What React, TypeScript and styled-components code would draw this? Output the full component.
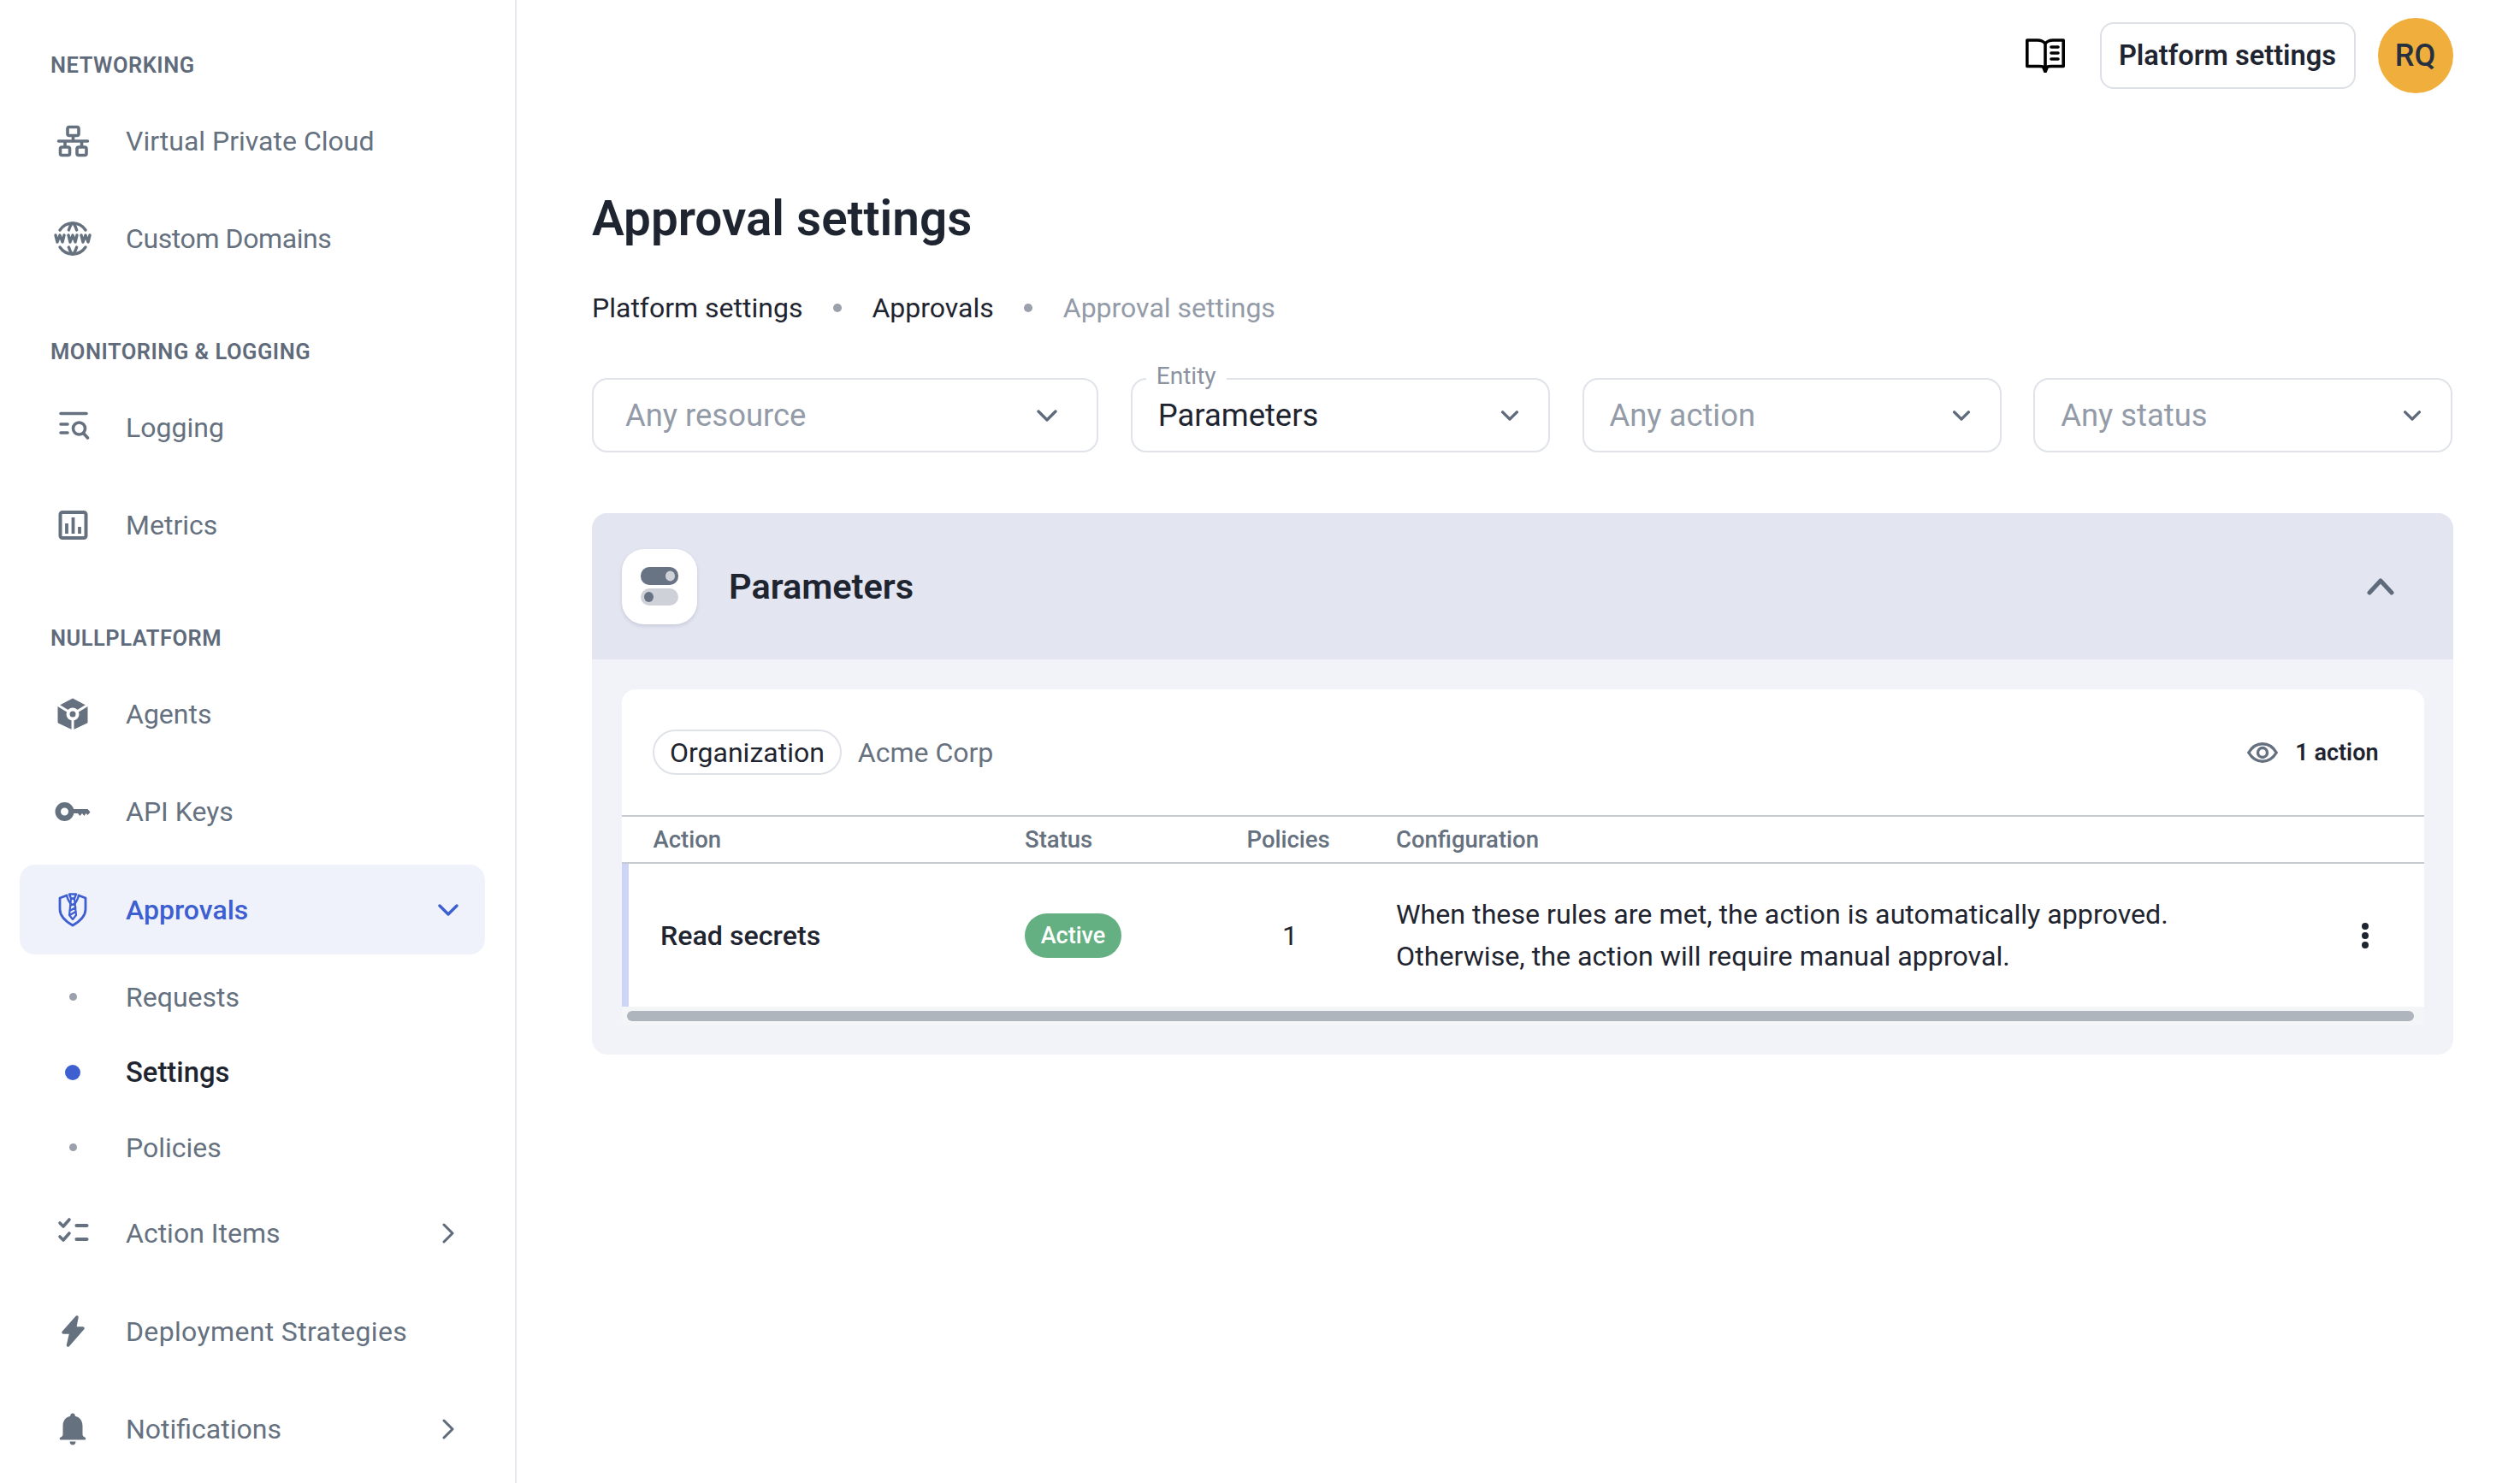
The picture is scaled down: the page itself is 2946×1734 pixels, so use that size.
import React from "react";
import styled, { createGlobalStyle } from "styled-components";
import { TbWorldWww } from "react-icons/tb";

const GlobalStyle = createGlobalStyle`
  html, body { margin: 0; padding: 0; background: #fff; }
  body { font-family: "Roboto", "Liberation Sans", sans-serif; color: #1f2530; }
  * { box-sizing: border-box; }
`;

const GRAY = "#667180";
const BLUE = "#3d5fd0";

const Page = styled.div`
  display: flex;
  width: 2946px;
  height: 1734px;
  overflow: hidden;
`;

const Sidebar = styled.nav`
  flex: 0 0 604px;
  border-right: 2px solid #e8eaef;
  padding: 56px 35px 0 23px;
`;

const SectionTitle = styled.h3<{ $gap?: boolean }>`
  margin: ${(p) => (p.$gap ? "59.5px" : "0")} 0 16px 36px;
  height: 40px;
  line-height: 40px;
  font-size: 25.5px;
  font-weight: 600;
  letter-spacing: 0.5px;
  color: #5f6b7b;
  text-transform: uppercase;
`;

const NavItem = styled.div<{ $active?: boolean }>`
  display: flex;
  align-items: center;
  height: 105px;
  margin-bottom: 9.5px;
  padding: 0 31px 0 38px;
  border-radius: 18px;
  background: ${(p) => (p.$active ? "#eff2fb" : "transparent")};
  color: ${(p) => (p.$active ? BLUE : GRAY)};
  font-size: 32px;
  font-weight: ${(p) => (p.$active ? 500 : 400)};
`;

const NavIcon = styled.span`
  display: flex;
  align-items: center;
  justify-content: center;
  width: 48px;
  height: 48px;
  margin-right: 38px;
  flex: none;
  svg { display: block; }
`;

const NavLabel = styled.span<{ $track?: number }>`
  flex: 1;
  line-height: 40px;
  letter-spacing: ${(p) => p.$track ?? 0}px;
`;

const SubList = styled.div`
  margin: -4px 0 4px;
`;

const SubItem = styled.div<{ $active?: boolean }>`
  display: flex;
  align-items: center;
  height: 88px;
  padding-left: 38px;
  font-size: ${(p) => (p.$active ? "32.8px" : "32px")};
  font-weight: ${(p) => (p.$active ? 500 : 400)};
  color: ${(p) => (p.$active ? "#1f2530" : GRAY)};
`;

const DotSlot = styled.span`
  display: flex;
  align-items: center;
  justify-content: center;
  width: 48px;
  margin-right: 38px;
`;

const Dot = styled.i<{ $active?: boolean }>`
  display: block;
  width: ${(p) => (p.$active ? "18px" : "9px")};
  height: ${(p) => (p.$active ? "18px" : "9px")};
  border-radius: 50%;
  background: ${(p) => (p.$active ? BLUE : "#9aa1ad")};
`;

const Main = styled.main`
  flex: 1;
  min-width: 0;
  padding: 0 78.5px 0 88px;
`;

const TopBar = styled.header`
  display: flex;
  align-items: center;
  justify-content: flex-end;
  height: 130px;
`;

const BookButton = styled.span`
  display: flex;
  margin-right: 41px;
`;

const PlatformButton = styled.button`
  height: 78px;
  width: 299px;
  padding: 0;
  margin-right: 26px;
  background: #fff;
  border: 2px solid #dde0e6;
  border-radius: 16px;
  font: 600 32.6px "Roboto", sans-serif;
  color: #1f2530;
`;

const Avatar = styled.div`
  display: flex;
  align-items: center;
  justify-content: center;
  width: 88px;
  height: 88px;
  border-radius: 50%;
  background: #f0ae3c;
  font-size: 36px;
  font-weight: 500;
  color: #263040;
`;

const Title = styled.h1`
  margin: 91px 0 49px;
  height: 70px;
  line-height: 70px;
  font-size: 56.6px;
  font-weight: 600;
  color: #1f2530;
`;

const Breadcrumbs = styled.div`
  display: flex;
  align-items: center;
  height: 40px;
  font-size: 32px;
  margin-bottom: 62px;
`;

const Crumb = styled.span<{ $current?: boolean }>`
  color: ${(p) => (p.$current ? "#949ba8" : "#1f2530")};
`;

const CrumbDot = styled.i`
  width: 10px;
  height: 10px;
  border-radius: 50%;
  margin: 0 35.500px;
  background: #9aa1ad;
`;

const Filters = styled.div`
  display: grid;
  grid-template-columns: 592fr 490fr 490fr 490fr;
  gap: 37.5px;
  margin-bottom: 71px;
`;

const Select = styled.div<{ $wide?: boolean }>`
  position: relative;
  display: flex;
  align-items: center;
  justify-content: space-between;
  height: 87px;
  padding: 0 ${(p) => (p.$wide ? "46px" : "35px")} 0 ${(p) => (p.$wide ? "37px" : "30px")};
  border: 2px solid #e0e3e9;
  border-radius: 18px;
  background: #fff;
`;

const SelectText = styled.span<{ $filled?: boolean }>`
  font-size: 36.4px;
  color: ${(p) => (p.$filled ? "#1f2530" : "#949ba8")};
`;

const FloatingLabel = styled.label`
  position: absolute;
  left: 16px;
  top: -20px;
  padding: 0 12px;
  background: #fff;
  line-height: 32px;
  font-size: 28px;
  color: #8b93a0;
`;

const Card = styled.section`
  border-radius: 18px;
  overflow: hidden;
  background: #f1f3f8;
`;

const CardHead = styled.div`
  display: flex;
  align-items: center;
  height: 171px;
  padding: 0 69px 0 35px;
  background: #e3e6f1;
`;

const Tile = styled.div`
  display: flex;
  align-items: center;
  justify-content: center;
  width: 88px;
  height: 88px;
  margin-right: 37px;
  border-radius: 26px;
  background: #fff;
  box-shadow: 0 2px 4px rgba(70, 80, 110, 0.18);
`;

const CardTitle = styled.h2`
  flex: 1;
  margin: 0;
  font-size: 41.5px;
  font-weight: 600;
  color: #1f2530;
`;

const CardBody = styled.div`
  padding: 35px 34px 34px 35px;
`;

const Inner = styled.div`
  background: #fff;
  border-radius: 16px 16px 6px 6px;
  overflow: hidden;
`;

const ScopeRow = styled.div`
  display: flex;
  align-items: center;
  height: 147px;
  padding: 0 53px 0 36px;
`;

const Pill = styled.span`
  display: flex;
  align-items: center;
  height: 53px;
  padding: 0 18px;
  border: 2px solid #dfe2e8;
  border-radius: 27px;
  font-size: 32px;
  color: #1f2530;
`;

const ScopeName = styled.span`
  flex: 1;
  margin-left: 19px;
  font-size: 32px;
  color: #68727f;
`;

const ActionCount = styled.span`
  display: flex;
  align-items: center;
  gap: 20px;
  font-size: 27px;
  font-weight: 600;
  color: #1f2530;
`;

const HeadRow = styled.div`
  display: grid;
  grid-template-columns: 434.5px 259.5px 174.5px 1fr;
  align-items: center;
  height: 57px;
  padding-left: 36.5px;
  border-top: 2px solid #c8cad2;
  border-bottom: 2px solid #c8cad2;
  font-size: 27.5px;
  font-weight: 500;
  color: #667180;
`;

const DataRow = styled.div`
  display: grid;
  grid-template-columns: 426px 259.5px 174.5px 1fr 48px;
  align-items: center;
  height: 167px;
  padding: 0 45px 0 37px;
  border-left: 8px solid #ccd5f5;
  font-size: 32.2px;
`;

const ActionName = styled.span`
  font-weight: 500;
  color: #1f2530;
`;

const Badge = styled.span`
  display: inline-flex;
  align-items: center;
  justify-content: center;
  width: 113px;
  height: 52px;
  border-radius: 26px;
  background: #64b082;
  font-size: 27px;
  font-weight: 500;
  color: #fff;
`;

const Count = styled.span`
  width: 101px;
  text-align: center;
`;

const Config = styled.p`
  margin: 0;
  line-height: 49px;
  color: #1f2530;
`;

const Kebab = styled.span`
  display: flex;
  justify-content: center;
`;

const Track = styled.div`
  height: 22px;
  padding: 5px 12px 0 6px;
  background: #f4f5f7;
`;

const Thumb = styled.div`
  height: 12px;
  border-radius: 6px;
  background: #aeb5bd;
`;

const I = ({ children, c = GRAY }: { children: React.ReactNode; c?: string }) => (
  <svg
    width="48"
    height="48"
    viewBox="0 0 48 48"
    fill="none"
    stroke={c}
    strokeWidth="3.6"
    strokeLinecap="round"
    strokeLinejoin="round"
  >
    {children}
  </svg>
);

const LanIcon = () => (
  <I>
    <rect x="18" y="7.5" width="13" height="10" rx="2" />
    <path d="M24.5 18v6M7.500 24h34M15 24v6M34.500 24v6" />
    <rect x="9.500" y="31" width="11" height="9.500" rx="2" />
    <rect x="29" y="31" width="11" height="9.500" rx="2" />
  </I>
);
const LogIcon = () => (
  <I>
    <path d="M10 7.500h30M10 20h8M10 30h8" />
    <circle cx="31.500" cy="25" r="7" />
    <path d="M37 31l4.500 5" />
  </I>
);
const MetricsIcon = () => (
  <I>
    <rect x="9.500" y="9" width="30" height="30" rx="2.500" strokeWidth="4" />
    <path strokeLinecap="butt" strokeWidth="3.800" d="M17 22v12M24.500 15v19M32 26v8" />
  </I>
);
const AgentIcon = () => (
  <svg width="48" height="48" viewBox="0 0 48 48">
    <path d="M24 6l17 9v19L24 42 7 34V15z" fill={GRAY} stroke={GRAY} strokeWidth="1" strokeLinejoin="round" />
    <path d="M24 24L6 13M24 24l18-11M24 24v20" stroke="#fff" strokeWidth="3" />
    <circle cx="24" cy="24" r="7.500" fill="#fff" />
    <circle cx="24" cy="24" r="3.500" fill={GRAY} />
  </svg>
);
const KeyIcon = () => (
  <svg width="48" height="48" viewBox="0 0 48 48" fill={GRAY}>
    <circle cx="14.500" cy="24" r="7.750" fill="none" stroke={GRAY} strokeWidth="6.500" />
    <path d="M21 21h20.500l3 3.500-3 3.500-2-2-2 3-2.500-3-2.500 3-2.500-3H21z" />
  </svg>
);
const ShieldIcon = () => (
  <I c={BLUE}>
    <path strokeWidth="2.800" d="M17 7l-8 3v13c0 8 7 14.500 15 19 8-4.500 15-11 15-19V10l-8-3" />
    <path strokeWidth="2.400" d="M17 7c1 5 4 9 5.500 11M31 7c-1 5-4 9-5.500 11M20 5.500h8l-2 5h-4z" />
    <path strokeWidth="2.200" d="M22 11l-2 19 4 5 4-5-2-19zM21 19l6-3M20.500 25l7-4M20.500 30l7-4" />
  </I>
);
const ChecksIcon = () => (
  <I>
    <path d="M9 12l4 4 7-8M9 28l4 4 7-8" />
    <path strokeWidth="4.200" d="M28.500 15h12M28.500 31h12" />
  </I>
);
const BoltIcon = () => (
  <svg width="48" height="48" viewBox="0 0 48 48" fill={GRAY} stroke={GRAY} strokeWidth="3.500" strokeLinejoin="round">
    <path d="M29 7L13 25h9l-3.500 15L36 20h-9.500z" />
  </svg>
);
const BellIcon = () => (
  <svg width="48" height="48" viewBox="0 0 48 48" fill={GRAY}>
    <path d="M24 5.500c1.700 0 2.800 1.200 2.800 3.200 5.800 1.400 8.700 5.500 8.700 11.800v9.500c0 2 1 2.800 3 3.800 1.200.7 1.200 2.700-.5 2.700h-28c-1.700 0-1.700-2-.5-2.700 2-1 3-1.800 3-3.800v-9.500c0-6.300 2.900-10.400 8.700-11.800 0-2 1.100-3.200 2.800-3.200z" />
    <path d="M20.500 38.500h7c0 2.500-1.500 4-3.500 4s-3.500-1.500-3.500-4z" />
  </svg>
);
const ChevronDown = ({ w = 24, c = "#5f6b7b", sw = 3.4 }: { w?: number; c?: string; sw?: number }) => (
  <svg width={w} height={w} viewBox="0 0 24 24" fill="none" stroke={c} strokeWidth={(sw * 24) / w} strokeLinecap="round" strokeLinejoin="round">
    <path d="M2 7l10 10L22 7" />
  </svg>
);
const ChevronRight = () => (
  <svg width="24" height="24" viewBox="0 0 24 24" fill="none" stroke="#5f6b7b" strokeWidth="3" strokeLinecap="round" strokeLinejoin="round">
    <path d="M7 2l10 10L7 22" />
  </svg>
);
const BookIcon = () => (
  <svg width="46" height="40" viewBox="0 0 46 40" fill="none" stroke="#000" strokeWidth="3.600" strokeLinejoin="round">
    <path d="M23 6c-2-2.500-5-4-9-4H1.800v30.500H16c3.500 0 6 .5 7 2 1-1.500 3.500-2 7-2h14.200V2H32c-4 0-7 1.500-9 4v29" />
    <path d="M21 34l2 5 2-5z" fill="#000" />
    <path d="M30 10h8M30 17h8M30 24h8" strokeWidth="3.600" strokeLinecap="round" />
  </svg>
);
const ToggleIcon = () => (
  <svg width="44" height="46" viewBox="0 0 44 46">
    <rect x="0" y="0" width="44" height="21" rx="10" fill="#687384" />
    <ellipse cx="34.500" cy="10.500" rx="5.500" ry="6" fill="#ced2d8" />
    <rect x="0" y="25" width="44" height="20" rx="10" fill="#ced2d8" />
    <ellipse cx="9.500" cy="35" rx="5.500" ry="6" fill="#687384" />
  </svg>
);
const EyeIcon = () => (
  <svg width="36" height="24" viewBox="0 0 36 24" fill="none" stroke="#667180" strokeWidth="3.400">
    <path d="M1.800 12C6 5 11.500 1.800 18 1.800S30 5 34.200 12C30 19 24.500 22.200 18 22.200S6 19 1.800 12z" />
    <circle cx="18" cy="12" r="5.500" />
  </svg>
);
const KebabIcon = () => (
  <svg width="10" height="32" viewBox="0 0 10 32" fill="#1f2530">
    <circle cx="5" cy="5" r="4" />
    <circle cx="5" cy="16" r="4" />
    <circle cx="5" cy="27" r="4" />
  </svg>
);

export default function App() {
  return (
    <Page>
      <GlobalStyle />
      <Sidebar>
        <SectionTitle>Networking</SectionTitle>
        <NavItem>
          <NavIcon><LanIcon /></NavIcon>
          <NavLabel>Virtual Private Cloud</NavLabel>
        </NavItem>
        <NavItem>
          <NavIcon><TbWorldWww size={48} color={GRAY} strokeWidth={1.7} /></NavIcon>
          <NavLabel $track={-0.4}>Custom Domains</NavLabel>
        </NavItem>
        <SectionTitle $gap>Monitoring &amp; Logging</SectionTitle>
        <NavItem>
          <NavIcon><LogIcon /></NavIcon>
          <NavLabel>Logging</NavLabel>
        </NavItem>
        <NavItem>
          <NavIcon><MetricsIcon /></NavIcon>
          <NavLabel>Metrics</NavLabel>
        </NavItem>
        <SectionTitle $gap>Nullplatform</SectionTitle>
        <NavItem>
          <NavIcon><AgentIcon /></NavIcon>
          <NavLabel>Agents</NavLabel>
        </NavItem>
        <NavItem>
          <NavIcon><KeyIcon /></NavIcon>
          <NavLabel>API Keys</NavLabel>
        </NavItem>
        <NavItem $active>
          <NavIcon><ShieldIcon /></NavIcon>
          <NavLabel>Approvals</NavLabel>
          <ChevronDown c={BLUE} />
        </NavItem>
        <SubList>
          <SubItem><DotSlot><Dot /></DotSlot>Requests</SubItem>
          <SubItem $active><DotSlot><Dot $active /></DotSlot>Settings</SubItem>
          <SubItem><DotSlot><Dot /></DotSlot>Policies</SubItem>
        </SubList>
        <NavItem>
          <NavIcon><ChecksIcon /></NavIcon>
          <NavLabel>Action Items</NavLabel>
          <ChevronRight />
        </NavItem>
        <NavItem>
          <NavIcon><BoltIcon /></NavIcon>
          <NavLabel $track={0.35}>Deployment Strategies</NavLabel>
        </NavItem>
        <NavItem>
          <NavIcon><BellIcon /></NavIcon>
          <NavLabel>Notifications</NavLabel>
          <ChevronRight />
        </NavItem>
      </Sidebar>
      <Main>
        <TopBar>
          <BookButton><BookIcon /></BookButton>
          <PlatformButton>Platform settings</PlatformButton>
          <Avatar>RQ</Avatar>
        </TopBar>
        <Title>Approval settings</Title>
        <Breadcrumbs>
          <Crumb>Platform settings</Crumb>
          <CrumbDot />
          <Crumb>Approvals</Crumb>
          <CrumbDot />
          <Crumb $current>Approval settings</Crumb>
        </Breadcrumbs>
        <Filters>
          <Select $wide>
            <SelectText>Any resource</SelectText>
            <ChevronDown w={24} />
          </Select>
          <Select>
            <FloatingLabel>Entity</FloatingLabel>
            <SelectText $filled>Parameters</SelectText>
            <ChevronDown w={20} />
          </Select>
          <Select>
            <SelectText>Any action</SelectText>
            <ChevronDown w={20} />
          </Select>
          <Select>
            <SelectText>Any status</SelectText>
            <ChevronDown w={20} />
          </Select>
        </Filters>
        <Card>
          <CardHead>
            <Tile><ToggleIcon /></Tile>
            <CardTitle>Parameters</CardTitle>
            <svg width="32" height="20" viewBox="0 0 32 20" fill="none" stroke="#5f6b7b" strokeWidth="5" strokeLinecap="round" strokeLinejoin="round">
              <path d="M3 17L16 3l13 14" />
            </svg>
          </CardHead>
          <CardBody>
            <Inner>
              <ScopeRow>
                <Pill>Organization</Pill>
                <ScopeName>Acme Corp</ScopeName>
                <ActionCount><EyeIcon />1 action</ActionCount>
              </ScopeRow>
              <HeadRow>
                <span>Action</span>
                <span>Status</span>
                <span>Policies</span>
                <span>Configuration</span>
              </HeadRow>
              <DataRow>
                <ActionName>Read secrets</ActionName>
                <span><Badge>Active</Badge></span>
                <Count>1</Count>
                <Config>
                  When these rules are met, the action is automatically approved.
                  <br />
                  Otherwise, the action will require manual approval.
                </Config>
                <Kebab><KebabIcon /></Kebab>
              </DataRow>
              <Track><Thumb /></Track>
            </Inner>
          </CardBody>
        </Card>
      </Main>
    </Page>
  );
}
